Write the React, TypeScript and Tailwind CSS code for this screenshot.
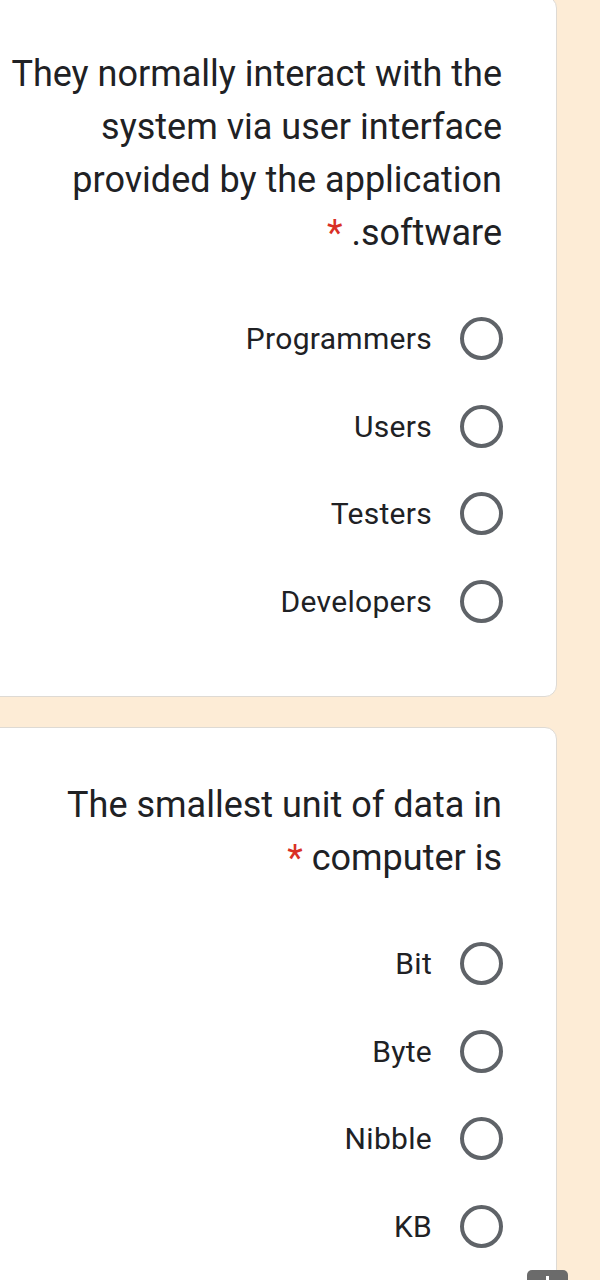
const QUESTIONS = [
  {
    lines: ['They normally interact with the', 'system via user interface', 'provided by the application'],
    last: '.software',
    options: ['Programmers', 'Users', 'Testers', 'Developers'],
  },
  {
    lines: ['The smallest unit of data in'],
    last: 'computer is',
    options: ['Bit', 'Byte', 'Nibble', 'KB'],
  },
];

function Radio() {
  return (
    <span className="block w-[43px] h-[43px] rounded-full border-[4px] border-[#5f6368] shrink-0" />
  );
}

function QuestionCard({ q, first }: { q: (typeof QUESTIONS)[number]; first?: boolean }) {
  return (
    <div
      className={`bg-white border border-[#dedad4] rounded-[12px] w-[600px] -ml-[43px] pt-[51px] pr-[53px] pb-[53px] shrink-0 ${
        first ? '-mt-[4px] h-[701px]' : 'mt-[30px]'
      }`}
    >
      <div className="text-right text-[36px] leading-[53px] text-[#202124] pr-[1px]">
        {q.lines.map(l => (
          <div key={l}>{l}</div>
        ))}
        <div>
          <span className="text-[#d93025]">*</span> {q.last}
        </div>
      </div>
      <div className="mt-[35px] flex flex-col">
        {q.options.map(o => (
          <div key={o} className="h-[87.5px] flex items-center justify-end gap-[28px]">
            <span className="text-[30px] tracking-[0.3px] text-[#202124]">{o}</span>
            <Radio />
          </div>
        ))}
      </div>
    </div>
  );
}

export default function App() {
  return (
    <div
      className="relative h-[1280px] w-[600px] overflow-hidden bg-[#fdecd6]"
      style={{ fontFamily: 'Roboto, "Liberation Sans", sans-serif' }}
    >
      <div className="flex flex-col w-[557px]">
        <QuestionCard q={QUESTIONS[0]} first />
        <QuestionCard q={QUESTIONS[1]} />
      </div>

      {/* floating button peeking in at the bottom */}
      <div className="absolute left-[527px] top-[1270px] w-[41px] h-[24px] rounded-[5px] bg-[#6b6b6b] flex justify-center pt-[6px]">
        <span className="block w-[3px] h-[6px] bg-white" />
      </div>
    </div>
  );
}
